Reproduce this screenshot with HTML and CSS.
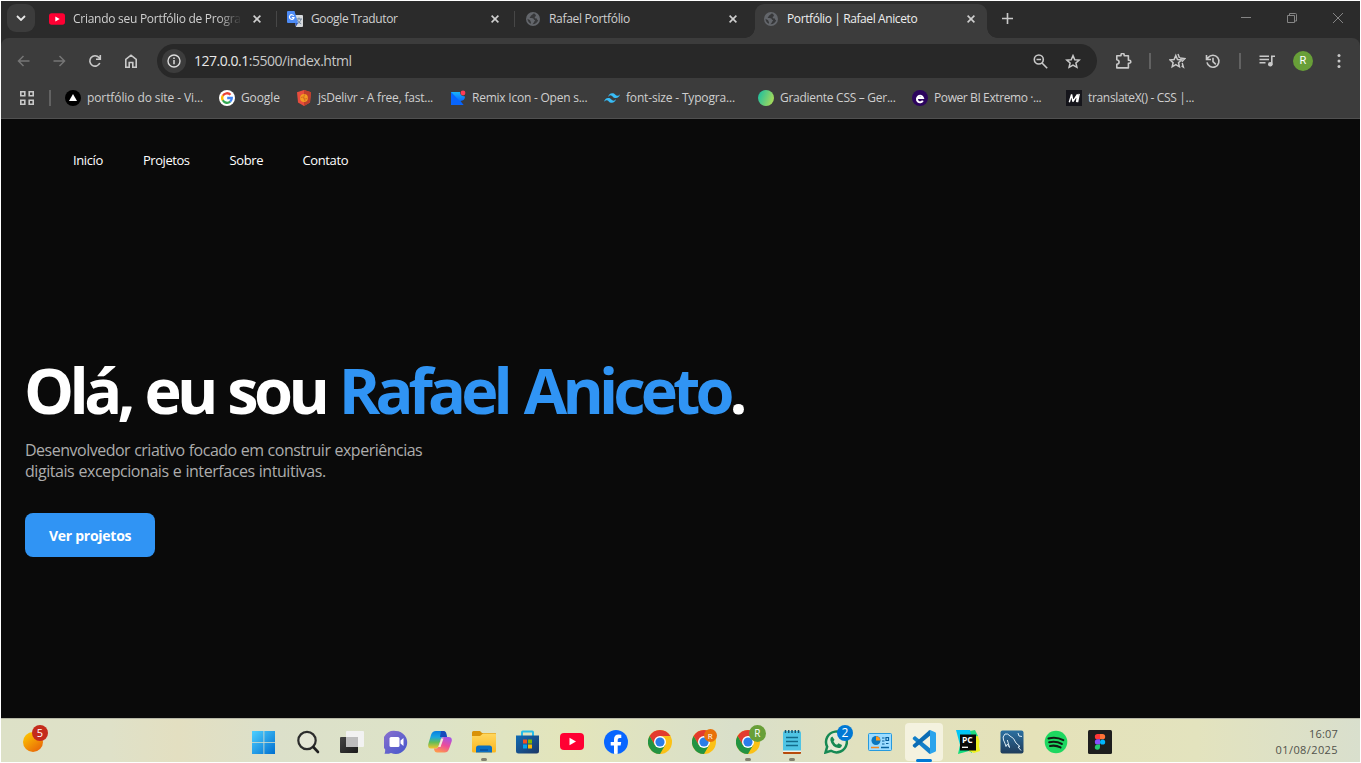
FILE: index.html
```html
<!DOCTYPE html>
<html lang="pt-BR">
<head>
<meta charset="utf-8">
<title>Portfólio | Rafael Aniceto</title>
<link rel="stylesheet" href="styles.css">
</head>
<body>
<svg class="defs" aria-hidden="true">
  <defs>
    <symbol id="close" viewBox="0 0 8 8"><path d="M.6 .6 7.4 7.4M7.4 .6.6 7.4" stroke="#cfcfcf" stroke-width="1.6" fill="none"/></symbol>
    <symbol id="globe" viewBox="0 0 14 14"><circle cx="7" cy="7" r="7" fill="#63666b"/><path d="M8 1.500C6.600 1.600 6.800 3 5.600 3.200 4.500 3.400 5.200 4.500 4.200 4.800 3.500 5.200 3.700 6 4.300 6.100 6 6.300 7.500 6 7.800 7.300c.2.900 1.300.5 1.300 1.300 0 .9-1 .7-1.200 1.600-.1.800-1 1.300-1.500 2 2.700.2 5.200-1.500 5.800-4.200-.8.300-1.400-.6-1.200-1.500-.9.300-2.200 0-2.300-1-.1-1 1.200-1 1.200-1.700C10 2.900 9.100 1.700 8 1.500zM1.500 6.800c1 1 2.500.9 2.800 1.900.2.900 1 1.200.7 3.100C2.900 11 1.400 9 1.500 6.800z" fill="#37383a"/></symbol>
    <symbol id="yt" viewBox="0 0 24 17"><rect width="24" height="17" rx="4" fill="#ff0033"/><path d="M9.500 4.800 16 8.500 9.500 12.200z" fill="#fff"/></symbol>
    <symbol id="chrome" viewBox="0 0 24 24"><circle cx="12" cy="12" r="12" fill="#fbc116"/><path d="M12 0A12 12 0 0 0 1.600 6L6.800 15 12 6H22.400A12 12 0 0 0 12 0z" fill="#e33b2e"/><path d="M1.600 6A12 12 0 0 0 12 24L17.200 15H6.800z" fill="#229342"/><circle cx="12" cy="12" r="6" fill="#fff"/><circle cx="12" cy="12" r="4.600" fill="#2b7de9"/></symbol>
    <linearGradient id="win" x1="0" y1="0" x2="1" y2="1"><stop offset="0" stop-color="#4fd0ff"/><stop offset="1" stop-color="#006fd0"/></linearGradient>
    <linearGradient id="ball" x1="0" y1="0" x2=".8" y2="1"><stop offset="0" stop-color="#ffd000"/><stop offset="1" stop-color="#e86408"/></linearGradient>
    <linearGradient id="purple" x1="0" y1="0" x2="1" y2="1"><stop offset="0" stop-color="#8b70ce"/><stop offset="1" stop-color="#4457cc"/></linearGradient>
    <linearGradient id="grad" x1="0" x2="1" y2=".4"><stop stop-color="#12bda5"/><stop offset="1" stop-color="#9fd95d"/></linearGradient>
    <linearGradient id="cpa" x1="0" y1="0" x2="0" y2="1"><stop stop-color="#087ee0"/><stop offset=".35" stop-color="#1aa6e0"/><stop offset=".65" stop-color="#62bd58"/><stop offset="1" stop-color="#f8c42c"/></linearGradient>
    <linearGradient id="cpb" x1=".7" y1="0" x2=".3" y2="1"><stop stop-color="#a554e6"/><stop offset=".5" stop-color="#ec4c9a"/><stop offset="1" stop-color="#ff994d"/></linearGradient>
    <linearGradient id="fold" y2="1" x2="0"><stop stop-color="#ffd75e"/><stop offset="1" stop-color="#fbb71e"/></linearGradient>
    <linearGradient id="store" y2="1" x2="1"><stop stop-color="#106bb4"/><stop offset="1" stop-color="#1d3766"/></linearGradient>
    <linearGradient id="dark" x2="1" y2="1"><stop stop-color="#444"/><stop offset="1" stop-color="#1a1a1a"/></linearGradient>
    <linearGradient id="pyc" x2="0" y2="1"><stop stop-color="#00c2ff"/><stop offset=".5" stop-color="#05cfd8"/><stop offset="1" stop-color="#14e06a"/></linearGradient>
    <linearGradient id="sql" y2="1" x2="0"><stop stop-color="#2b70a1"/><stop offset="1" stop-color="#203c5b"/></linearGradient>
    <linearGradient id="remix" y2="1" x2="0"><stop stop-color="#18b4f8"/><stop offset="1" stop-color="#0448fa"/></linearGradient>
  </defs>
</svg>
<div class="window">
  <header class="tabstrip">
    <button class="tab-search"><svg width="10" height="6" viewBox="0 0 10 6"><path d="M1 1l4 4 4-4" fill="none" stroke="#e8e8e8" stroke-width="1.800"/></svg></button>
    <div class="tab">
      <svg class="favicon" width="16" height="12"><use href="#yt"/></svg>
      <span class="tab-title fade t1">Criando seu Portfólio de Progra</span>
      <svg class="close" width="8" height="8"><use href="#close"/></svg>
    </div>
    <div class="tab split">
      <svg class="favicon" width="16" height="16" viewBox="0 0 16 16"><path d="M6 4h9a1 1 0 0 1 1 1v10a1 1 0 0 1-1 1H9z" fill="#d6d9dc"/><path d="M9 8h6M12 6.500V8M14 8c-.5 2.500-2 3.500-3.500 4.500M10.500 9c.8 2 2 3 3.700 3.700" stroke="#6b8098" fill="none"/><path d="M1 0h6.500L11 12H1a1 1 0 0 1-1-1V1a1 1 0 0 1 1-1z" fill="#4d8bf5"/><path d="M8 12h3l-2 3.500z" fill="#2f56b8"/><path d="M6.700 4.800A2.300 2.300 0 1 0 7 6.500H4.800" fill="none" stroke="#fff" stroke-width="1.200"/></svg>
      <span class="tab-title t2">Google Tradutor</span>
      <svg class="close" width="8" height="8"><use href="#close"/></svg>
    </div>
    <div class="tab split">
      <svg class="favicon" width="14" height="14"><use href="#globe"/></svg>
      <span class="tab-title t3">Rafael Portfólio</span>
      <svg class="close" width="8" height="8"><use href="#close"/></svg>
    </div>
    <div class="tab active">
      <svg class="favicon" width="14" height="14"><use href="#globe"/></svg>
      <span class="tab-title t4">Portfólio | Rafael Aniceto</span>
      <svg class="close" width="8" height="8"><use href="#close"/></svg>
    </div>
    <svg class="newtab" width="11" height="11" viewBox="0 0 11 11"><path d="M5.500 0v11M0 5.500h11" stroke="#c9c9c9" stroke-width="1.600"/></svg>
    <div class="caption">
      <svg width="10" height="10" viewBox="0 0 10 10"><path d="M0 4.500h10" stroke="#858585"/></svg>
      <svg width="10" height="10" viewBox="0 0 10 10"><path d="M.5 2.500h7v7h-7zM2.500 2V.5h6q1 0 1 1V8H8" fill="none" stroke="#858585"/></svg>
      <svg width="10" height="10" viewBox="0 0 10 10"><path d="M0 0l10 10M10 0L0 10" stroke="#858585"/></svg>
    </div>
  </header>

  <div class="toolbar">
    <div class="tool"><svg width="13" height="12" viewBox="0 0 13 12"><path d="M12.500 6H1.500M6.500 1l-5 5 5 5" fill="none" stroke="#757575" stroke-width="1.500"/></svg></div>
    <div class="tool"><svg width="13" height="12" viewBox="0 0 13 12"><path d="M.5 6h11M6.500 1l5 5-5 5" fill="none" stroke="#757575" stroke-width="1.500"/></svg></div>
    <div class="tool"><svg width="14" height="14" viewBox="0 0 14 14"><path d="M11.800 9A5.200 5.200 0 1 1 11 3.600l1 1.200M12.300 1v4.300H8" fill="none" stroke="#c9c9c9" stroke-width="1.600"/></svg></div>
    <div class="tool"><svg width="12" height="14" viewBox="0 0 12 14"><path d="M.8 5.300 6 1.200l5.200 4.100v7.900H7.800V8.500H4.200v4.700H.8z" fill="none" stroke="#c9c9c9" stroke-width="1.600"/></svg></div>
    <div class="omnibox">
      <span class="site-info"><svg width="14" height="14" viewBox="0 0 14 14"><circle cx="7" cy="7" r="6" fill="none" stroke="#dcdcdc" stroke-width="1.400"/><path d="M7 6v4.300M7 3.500V5" stroke="#dcdcdc" stroke-width="1.500"/></svg></span>
      <span class="url"><b>127.0.0.1</b>:5500/index.html</span>
      <div class="tool omni-tool"><svg width="16" height="15" viewBox="0 0 16 15"><circle cx="5.800" cy="5.500" r="4.500" fill="none" stroke="#c9c9c9" stroke-width="1.600"/><path d="M3.500 5.500h4.600M9 9l5.200 5.200" stroke="#c9c9c9" stroke-width="1.600"/></svg></div>
      <div class="tool omni-tool"><svg width="16" height="15" viewBox="0 0 16 15"><path d="M8 1.600l1.800 4.100 4.400.4-3.300 2.900 1 4.300L8 11l-3.900 2.300 1-4.300-3.300-2.900 4.400-.4z" fill="none" stroke="#c9c9c9" stroke-width="1.500"/></svg></div>
    </div>
    <div class="tool puzzle"><svg width="17" height="17" viewBox="0 0 17 17"><path d="M1.800 2.800h4.200V2a1.600 1.600 0 0 1 3.200 0v.8h4.200v4.400h.9a1.500 1.500 0 0 1 0 3h-.9v4.700H1.800v-3.600q2.300-.3 2.300-2.200T1.800 6.800z" fill="none" stroke="#c9c9c9" stroke-width="1.600" stroke-linejoin="round"/></svg></div>
    <i class="sep"></i>
    <div class="tool"><svg width="17" height="16" viewBox="0 0 17 16"><path d="M6.800 2.500l1.700 4 4.100.4-3.100 2.800.9 4.100-3.600-2.200-3.600 2.200.9-4.100L1 6.900l4.100-.4z" fill="none" stroke="#c9c9c9" stroke-width="1.500"/><path d="M9 1l1.500 4M11 5l5 .5-3.200 3.200M13.200 10l1.200 4-1.800-1.200" fill="none" stroke="#c9c9c9" stroke-width="1.400"/></svg></div>
    <div class="tool"><svg width="16" height="15" viewBox="0 0 16 15"><path d="M2 8.300A6 6 0 1 0 3.200 3.500L1.700 5.400M1.500 1v4.500H6M8 3.800v3.900l2.800 2.600" fill="none" stroke="#c9c9c9" stroke-width="1.600"/></svg></div>
    <i class="sep"></i>
    <div class="tool"><svg width="16" height="13" viewBox="0 0 16 13"><path d="M.5 1.300h9.500M.5 4.500h9.500M.5 7.700h6M12.800 9.500V1.300h3.200" fill="none" stroke="#c9c9c9" stroke-width="1.600"/><circle cx="11.300" cy="9.300" r="2.300" fill="#c9c9c9"/></svg></div>
    <div class="tool"><span class="avatar">R</span></div>
    <div class="tool"><svg width="4" height="16" viewBox="0 0 4 16"><g fill="#c9c9c9"><circle cx="2" cy="2.500" r="1.500"/><circle cx="2" cy="8" r="1.500"/><circle cx="2" cy="13.500" r="1.500"/></g></svg></div>
  </div>

  <nav class="bookmarks">
    <svg class="apps" width="14" height="14" viewBox="0 0 14 14"><path d="M.8.800h4v4h-4zM9.200.800h4v4h-4zM.8 9.200h4v4h-4zM9.200 9.200h4v4h-4z" fill="none" stroke="#c9c9c9" stroke-width="1.600"/></svg>
    <i class="sep"></i>
    <div class="bookmark"><svg width="16" height="16" viewBox="0 0 16 16"><circle cx="8" cy="8" r="8" fill="#000"/><path d="M8 4l4 7H4z" fill="#fff"/></svg><span class="b1">portfólio do site - Vi...</span></div>
    <div class="bookmark short"><svg width="16" height="16" viewBox="0 0 16 16"><circle cx="8" cy="8" r="8" fill="#fff"/><g fill="none" stroke-width="2.300"><path d="M11.500 4.800A4.800 4.800 0 0 0 3.800 5.700" stroke="#ea4335"/><path d="M3.900 5.500a4.800 4.800 0 0 0 0 5" stroke="#fbbc05"/><path d="M3.800 10.300a4.800 4.800 0 0 0 7.500 1.200" stroke="#34a853"/><path d="M11.200 11.600A4.800 4.800 0 0 0 12.800 8H8.200" stroke="#4285f4"/></g></svg><span class="b2">Google</span></div>
    <div class="bookmark"><svg width="16" height="16" viewBox="0 0 16 16"><path d="M8 0l7 2.300-1 10.200L8 16l-6-3.500L1 2.300z" fill="#e84d3d"/><path d="M8 0l7 2.300-1 10.200L8 16z" fill="#bd3f2c"/><circle cx="8" cy="8" r="3.900" fill="#f39c22"/><path d="M5 7.500q1.500-1 3 .5t3 .5M8.500 4.500q-2 3 .5 6.500" fill="none" stroke="#d76b20"/></svg><span class="b3">jsDelivr - A free, fast...</span></div>
    <div class="bookmark"><svg width="16" height="16" viewBox="0 0 16 16"><path d="M1 2h9q0 4 5 4.500 0 4-4.500 4.500l3 4H1z" fill="url(#remix)"/><path d="M1 2l12.500 13H1z" fill="#0865fc"/><circle cx="13" cy="3" r="2.400" fill="#ff3b55"/></svg><span class="b4">Remix Icon - Open s...</span></div>
    <div class="bookmark"><svg width="16" height="16" viewBox="0 0 16 16"><path d="M4 7Q5 3.200 8.200 3.200c3 0 3 2.200 4.800 2.600q1.600.4 3-1.600Q15 8 11.800 8C9 8 8.800 5.800 7 5.400Q5.400 5 4 7zM0 11.800Q1 8 4.200 8c3 0 3 2.200 4.800 2.600q1.600.4 3-1.600Q11 12.800 7.800 12.800c-2.800 0-3-2.200-4.800-2.600q-1.600-.4-3 1.600z" fill="#38bdf8"/></svg><span class="b5">font-size - Typogra...</span></div>
    <div class="bookmark"><svg width="16" height="16" viewBox="0 0 16 16"><circle cx="8" cy="8" r="8" fill="url(#grad)"/></svg><span class="b6">Gradiente CSS – Ger...</span></div>
    <div class="bookmark"><svg width="16" height="16" viewBox="0 0 16 16"><circle cx="8" cy="8" r="8" fill="#2c045d"/><path d="M5.200 8H11A3.100 3.300 0 1 0 10.800 10.600" fill="none" stroke="#fff" stroke-width="2"/></svg><span class="b7">Power BI Extremo ·...</span></div>
    <div class="bookmark"><svg width="16" height="16" viewBox="0 0 16 16"><rect width="16" height="16" fill="#15151b"/><path d="M3.300 12.200L5.600 4.500 6.900 11.500 11.500 4.300 10.600 12.200M13.200 3.900L11.600 12.200" fill="none" stroke="#fff" stroke-width="1.400" stroke-linejoin="bevel"/></svg><span class="b8">translateX() - CSS |...</span></div>
  </nav>

  <main class="page">
    <nav class="menu"><a class="m1">Inicío</a><a class="m2">Projetos</a><a class="m3">Sobre</a><a class="m4">Contato</a></nav>
    <section class="hero">
      <h1>Olá, eu sou <span>Rafael Aniceto</span>.</h1>
      <p><span class="p1">Desenvolvedor criativo focado em construir experiências</span><br><span class="p2">digitais excepcionais e interfaces intuitivas.</span></p>
      <a class="cta">Ver projetos</a>
    </section>
  </main>

  <footer class="taskbar">
    <div class="widget"><svg width="20" height="20" viewBox="0 0 20 20"><circle cx="10" cy="10" r="10" fill="url(#ball)"/></svg><span class="badge news">5</span></div>
    <div class="apps-row">
      <div class="app"><svg width="24" height="24" viewBox="0 0 24 24"><path d="M0 1H11.500v11H0zM12.300 1H23v11H12.300zM0 12.800H11.500V24H0zM12.300 12.800H23V24H12.300z" fill="url(#win)"/></svg></div>
      <div class="app"><svg width="24" height="24" viewBox="0 0 24 24"><circle cx="11" cy="10.500" r="8.700" fill="#e4e6d5" stroke="#2c2c2c" stroke-width="2.200"/><path d="M17.300 17l4.700 5" stroke="#202020" stroke-width="2.600" stroke-linecap="round"/></svg></div>
      <div class="app"><svg width="24" height="24" viewBox="0 0 24 24"><rect x="0" y="7" width="18" height="16" rx="1" fill="url(#dark)"/><rect x="6" y="1" width="18" height="16" rx="1" fill="#f2f2f2"/><path d="M6 7h12v10H6z" fill="#bdbdbd"/></svg></div>
      <div class="app"><svg width="24" height="24" viewBox="0 0 24 24"><path d="M12 1A11.500 11.500 0 1 1 7 23q-3 1.200-6.500.700.8-2 .7-4.200A11.500 11.500 0 0 1 12 1z" fill="url(#purple)"/><rect x="5.500" y="7" width="10" height="10" rx="1.500" fill="#fff"/><path d="M16.500 10.500l3-2.500v8l-3-2.500z" fill="#fff"/></svg></div>
      <div class="app"><svg width="24" height="24" viewBox="0 0 24 24"><path d="M8 1h7q2.500 0 3 3l.8 3h-3.300q-2 0-2.600 2l-2.400 7.500Q9.800 18.500 7.500 18.500H3Q-.5 18.500.3 14L3 5Q4.200 1 8 1z" fill="url(#cpa)"/><path d="M13 1h2.500q2.300 0 3 3l.6 3H12z" fill="#1649bc"/><path d="M16.500 7h4q4 0 3.200 4.300L21 19q-1.200 3.500-4.500 3.500H9q-2 0-2.600-2l-.5-2H8q2 0 2.600-2L13 9q.5-2 3.500-2z" fill="url(#cpb)"/><path d="M13.300 8.500h2.200l-3 8.500h-2.200z" fill="#f3ead8"/></svg></div>
      <div class="app running"><svg width="24" height="24" viewBox="0 0 24 24"><path d="M1.500 1H8l2 2h13q1 0 1 1v5H0V2.500Q0 1 1.500 1z" fill="#d99208"/><path d="M0 6h8l3-2.500h12q1 0 1 1V21q0 1.500-1.500 1.500h-21Q0 22.500 0 21z" fill="url(#fold)"/><path d="M4 22.500V18q0-2.500 2.500-2.500h11Q20 15.500 20 18v4.500z" fill="#0a6fc2"/><path d="M8 20h8" stroke="#064f9c" stroke-width="1.500"/></svg></div>
      <div class="app"><svg width="24" height="24" viewBox="0 0 24 24"><path d="M6 6V2.200q0-.7.7-.7h9.600q.7 0 .7.700V6" fill="none" stroke="#25bee9" stroke-width="2"/><path d="M0 5.500h23V21q0 2.500-2.500 2.500h-18Q0 23.500 0 21z" fill="url(#store)"/><path d="M7 9.500h4v4H7z" fill="#f25022"/><path d="M12 9.500h4v4h-4z" fill="#7fba00"/><path d="M7 14.500h4v4H7z" fill="#00a4ef"/><path d="M12 14.500h4v4h-4z" fill="#ffb900"/></svg></div>
      <div class="app"><svg width="24" height="17"><use href="#yt"/></svg></div>
      <div class="app"><svg width="24" height="24" viewBox="0 0 24 24"><circle cx="12" cy="12" r="12" fill="#0866ff"/><path d="M10 23.800v-8.300H6.700V12H10V9.500q0-5 4.700-5 1.400 0 2.600.3v3.100h-1.600q-2 0-2 1.900V12h3.500l-.6 3.500h-2.900v8.300q-1.900.3-3.700 0z" fill="#fff"/></svg></div>
      <div class="app"><svg width="24" height="24"><use href="#chrome"/></svg></div>
      <div class="app"><svg width="24" height="24"><use href="#chrome"/></svg><span class="badge mini">R</span></div>
      <div class="app running"><svg width="24" height="24"><use href="#chrome"/></svg><span class="badge profile">R</span></div>
      <div class="app running"><svg width="24" height="24" viewBox="0 0 24 24"><path d="M3 20h18v3q0 1-1 1H4q-1 0-1-1z" fill="#b74b0c"/><path d="M3 3q0-2 2-2h14q2 0 2 2v18H3z" fill="#4fc4e4"/><path d="M3 20.500h18v1.500H3z" fill="#f0f0e8"/><path d="M5.500 0v3M8.700 0v3M12 0v3M15.300 0v3M18.500 0v3" stroke="#17536f" stroke-width="1.500"/><path d="M6 7.500h12M6 11.500h12M6 15.500h12" stroke="#126b8b" stroke-width="1.700"/></svg></div>
      <div class="app"><svg width="24" height="24" viewBox="0 0 24 24"><path d="M1.500 22.500l1.700-5.800A10.400 10.400 0 1 1 7 20.800z" fill="#e7ead5" stroke="#168953" stroke-width="2.500"/><path d="M8.300 6.500l2.200 3.300-1 1.600q1.100 2.400 3.500 3.400l1.500-1.500 3.500 1.700q-.4 3.200-3.500 3.100Q7.800 17 6.300 10q-.2-2.800 2-3.500z" fill="#168953"/></svg><span class="badge count">2</span></div>
      <div class="app"><svg width="24" height="24" viewBox="0 0 24 24"><rect x=".5" y="3.500" width="23" height="17" rx="1" fill="#9ddcff" stroke="#269ade"/><circle cx="8" cy="10.500" r="4.500" fill="#0876bf"/><path d="M8 10.500V6.200a4.500 4.500 0 0 1 4.300 4.300z" fill="#ff9617"/><path d="M14 8h2.500M14 11h2.500M14 14h2.500M18 7.500h2.500v3H18zM18 13.500h2.500" fill="none" stroke="#075d9a" stroke-width="1.200"/><path d="M3 17.500h8" stroke="#f48720" stroke-width="1.500"/><path d="M13 17.500h8" stroke="#08639f" stroke-width="1.500"/></svg></div>
      <div class="app current"><svg width="24" height="24" viewBox="0 0 24 24"><path d="M1 7.500L3 6l16.500 13.500L18 24l-1-.5L.7 9z" fill="#137fc9"/><path d="M1 16.500L3 18 19.500 4.500 18 0l-1 .500L.7 15z" fill="#0a6cb5"/><path d="M18 0l5.200 2.300q.8.400.8 1.300v16.800q0 .9-.8 1.300L18 24z" fill="#2ba4ec"/></svg></div>
      <div class="app"><svg width="24" height="24" viewBox="0 0 24 24"><path d="M0 0h14l2 5v18l-3-2-11 3 2-9z" fill="url(#pyc)"/><path d="M14 6l8 0 1.500 5-.5 5 1 5-6 2-5-2z" fill="#edf020"/><path d="M14 1l5-1 3 6-6 1z" fill="#20dd80"/><rect x="4" y="4.500" width="16" height="16" fill="#080808"/><path d="M6 17.300h6" stroke="#fff" stroke-width="1.300"/></svg><span class="pc">PC</span></div>
      <div class="app"><svg width="24" height="24" viewBox="0 0 24 24"><rect x=".5" y=".5" width="23" height="23" rx="2" fill="url(#sql)"/><path d="M6 16.500Q5 13 3.500 10T5 4q3-.8 5 2 4 1.500 6 7l4 3.500-2 .5 3 3.500M6 16.500L7.500 14l2 3.500Q8 12 7.300 10M18 3l1 3 3 .5" fill="none" stroke="#dcecf5"/></svg></div>
      <div class="app"><svg width="24" height="24" viewBox="0 0 24 24"><circle cx="12" cy="12" r="11.300" fill="#1ed760"/><path d="M4.500 8.400q8-2 14.800 1.700M5.200 12.300q6.800-1.600 12.600 1.600M6 16q5.500-1.300 10.500 1.400" fill="none" stroke="#121a14" stroke-width="2.100" stroke-linecap="round"/></svg></div>
      <div class="app"><svg width="24" height="24" viewBox="0 0 24 24"><rect width="24" height="24" rx="1.500" fill="#1e1e1e"/><path d="M12 4H9.500a2.600 2.600 0 0 0 0 5.300H12z" fill="#ff3737"/><path d="M12 4h2.500a2.600 2.600 0 0 1 0 5.300H12z" fill="#ff7237"/><path d="M12 9.300H9.500a2.600 2.600 0 0 0 0 5.300H12z" fill="#874fff"/><circle cx="14.600" cy="12" r="2.600" fill="#00b6ff"/><path d="M12 14.600H9.500A2.600 2.600 0 1 0 12 17.300z" fill="#24cb71"/></svg></div>
    </div>
    <div class="clock"><span class="c1">16:07</span><span class="c2">01/08/2025</span></div>
  </footer>
</div>
</body>
</html>
```
FILE: styles.css
```css
* { box-sizing: border-box; }
body {
  margin: 0;
  padding: 1px;
  height: 763px;
  overflow: hidden;
  background: #fff;
  font-family: "Open Sans", "Noto Sans", sans-serif;
  color: #fff;
}
svg { display: block; flex: none; }
.defs { position: absolute; width: 0; height: 0; }
.window { width: 1359px; height: 761px; display: flex; flex-direction: column; background: #2b2b2b; }

/* Tab strip */
.tabstrip { height: 37px; flex: none; display: flex; }
.tab-search {
  width: 28px; height: 28px; margin: 3px 3px 0 6px; padding: 0; border: 0; border-radius: 9px;
  background: #3c3c3c; display: grid; place-items: center;
}
.tab { width: 238px; height: 34px; margin-top: 3px; padding: 0 15px 4px 11px; display: flex; align-items: center; flex: none; }
.tab .favicon { margin-right: 8px; }
.tab .favicon[width="14"] { margin: 0 9px 0 1px; }
.tab-title { flex: none; font-size: 12px; line-height: 16px; white-space: nowrap; color: #d0d0d0; width: 167px; margin-right: 13px; }
.t1 { letter-spacing: -.27px; }
.t2 { letter-spacing: -.35px; }
.t3 { letter-spacing: -.3px; }
.t4 { letter-spacing: -.4px; }
.fade { -webkit-mask-image: linear-gradient(90deg, #000 145px, transparent 169px); mask-image: linear-gradient(90deg, #000 145px, transparent 169px); }
.split { background: linear-gradient(#474747, #474747) 0 7px / 1px 16px no-repeat; }
.active { width: 232px; margin-left: 3px; padding-left: 8px; padding-right: 12px; border-radius: 9px 9px 0 0; background: #3c3c3c; position: relative; }
.active .tab-title { color: #eee; }
.active::before, .active::after { content: ""; position: absolute; bottom: 0; width: 10px; height: 10px; }
.active::before { left: -10px; background: radial-gradient(circle at 0 0, transparent 9.500px, #3c3c3c 10px); }
.active::after { right: -10px; background: radial-gradient(circle at 100% 0, transparent 9.500px, #3c3c3c 10px); }
.newtab { margin: 12px 0 0 15px; }
.caption { margin: 12px 17px 0 auto; display: flex; gap: 36px; }

/* Toolbar */
.toolbar { height: 46px; flex: none; padding: 0 4px; display: flex; align-items: center; background: #3c3c3c; border-radius: 8px 8px 0 0; }
.tool { width: 36px; height: 34px; flex: none; display: grid; place-items: center; }
.omnibox { width: 940px; height: 34px; margin-left: 8px; padding: 0 8px 0 5px; border-radius: 17px; background: #282828; display: flex; align-items: center; flex: none; }
.site-info { width: 24px; height: 24px; border-radius: 50%; background: #3c3c3c; display: grid; place-items: center; }
.url { margin: 0 auto 0 8px; font-size: 14px; line-height: 20px; letter-spacing: -.48px; color: #c7c7c7; }
.url b { font-weight: 400; color: #e8e8e8; }
.omni-tool { width: 32px; }
.puzzle { margin-left: 8px; }
.sep { width: 18px; height: 16px; background: linear-gradient(#626262, #626262) 8px 0 / 2px 16px no-repeat; flex: none; }
.avatar { width: 20px; height: 20px; border-radius: 50%; background: #689f38; font: 11px/20px Roboto, sans-serif; text-align: center; }

/* Bookmarks */
.bookmarks { height: 35px; flex: none; padding: 0 0 6px 19px; display: flex; align-items: center; background: #3c3c3c; border-bottom: 1px solid #505050; }
.bookmarks .sep { margin-left: 7px; margin-right: 6px; }
.bookmark { width: 154px; display: flex; align-items: center; gap: 6px; flex: none; font-size: 12px; line-height: 16px; color: #cfcfcf; white-space: nowrap; }
.short { width: 77px; }
.b1 { letter-spacing: -.1px; }
.b2 { letter-spacing: -.1px; }
.b3 { letter-spacing: -.22px; }
.b4 { letter-spacing: -.23px; }
.b5 { letter-spacing: -.17px; }
.b6 { letter-spacing: -.28px; }
.b7 { letter-spacing: -.4px; }
.b8 { letter-spacing: -.33px; }

/* Page */
.page { height: 599px; flex: none; background: #0a0a0a; }
.menu { display: flex; padding: 32px 0 0 72px; font-size: 13px; line-height: 18px; letter-spacing: -.38px; }
.m1 { width: 70px; }
.m2 { width: 86.500px; letter-spacing: -.45px; }
.m3 { width: 73px; }
.hero { padding: 186px 0 0 24px; }
h1 { margin: 0 0 0 -1px; font-size: 63px; line-height: 70px; font-weight: 700; letter-spacing: -4.600px; word-spacing: 1.700px; white-space: nowrap; }
h1 span { color: #3094f4; letter-spacing: -4.900px; word-spacing: 4.500px; }
.hero p { margin: 15px 0 0; font-size: 16px; line-height: 21px; color: #adadad; white-space: nowrap; }
.p1 { letter-spacing: -.5px; word-spacing: .4px; }
.p2 { letter-spacing: -.44px; word-spacing: .4px; }
.cta { display: block; width: 130px; height: 44px; margin-top: 31px; padding-left: 24px; border-radius: 8px; background: #3094f4; font-size: 14px; line-height: 46px; font-weight: 700; letter-spacing: -.27px; white-space: nowrap; }

/* Taskbar */
.taskbar {
  height: 44px; flex: none; display: flex; border-top: 1px solid #b7b8a7;
  background: linear-gradient(90deg, #dde1c7 0, #dfe1c8 8%, #e3dfc1 13%, #dce0ca 20%, #dde3c7 32%, #e3e5bb 42%, #d9dfca 54%, #e1e1bf 63%, #e5e2b9 76%, #e3e3be 88%, #d9dfcd 100%);
}
.widget { width: 240px; padding: 13px 0 0 22px; position: relative; flex: none; }
.apps-row { display: flex; flex: none; margin-left: .5px; }
.app { width: 44.040px; height: 43px; padding-top: 2px; display: grid; place-items: center; position: relative; flex: none; }
.badge { position: absolute; border-radius: 50%; text-align: center; color: #fff; }
.news { left: 31px; top: 6px; width: 16px; height: 16px; background: #c42b1c; font-size: 11px; line-height: 16px; }
.mini { left: 22px; top: 10px; width: 13px; height: 13px; background: #e8710a; font-size: 8px; line-height: 13px; }
.profile { left: 23px; top: 6px; width: 17px; height: 17px; background: #689f38; font-size: 10px; line-height: 17px; }
.count { left: 23px; top: 6px; width: 16px; height: 16px; background: #0078d4; font-size: 12px; line-height: 16px; }
.running::after, .current::after { content: ""; position: absolute; bottom: 1px; left: 19px; width: 6px; height: 3px; border-radius: 2px; background: #81816e; }
.current::before { content: ""; position: absolute; left: 3px; top: 4px; width: 38px; height: 38px; border-radius: 4px; background: #f4f2df; }
.current svg { position: relative; }
.current::after { width: 16px; left: 14px; background: #0078d4; bottom: 0; }
.pc { position: absolute; left: 16px; top: 15px; font: 700 8.500px/11px "Open Sans", sans-serif; }
.clock { margin-left: auto; padding: 7px 22px 0 0; display: flex; flex-direction: column; align-items: flex-end; font-size: 11px; line-height: 16px; color: #51524b; }
.c1 { letter-spacing: .2px; }
.c2 { letter-spacing: .4px; }
```
